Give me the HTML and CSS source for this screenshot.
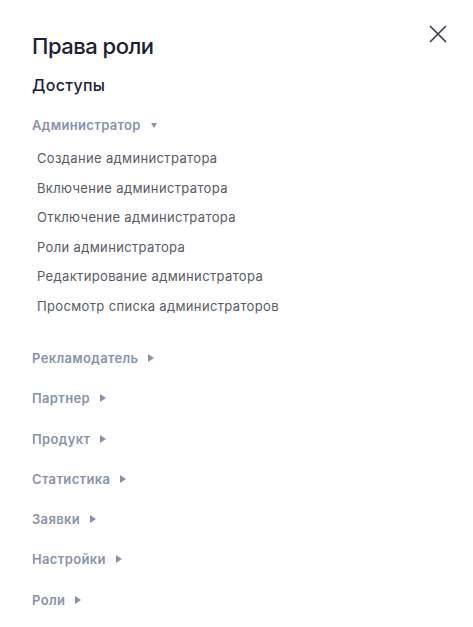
FILE: index.html
```html
<!DOCTYPE html>
<html lang="ru">
<head>
<meta charset="utf-8">
<link rel="stylesheet" href="styles.css">
</head>
<body>
<div class="panel">
  <div class="header">
    <h1 class="title">Права роли</h1>
    <button class="close" aria-label="Закрыть">
      <svg width="18" height="18" viewBox="0 0 18 18"><path d="M1.5 1.5 L16.5 16.5 M16.5 1.5 L1.5 16.5" stroke="#3d4155" stroke-width="1.7" stroke-linecap="round" fill="none"/></svg>
    </button>
  </div>
  <h2 class="subtitle">Доступы</h2>
  <div class="group open">
    <div class="group-head">Администратор <span class="caret down"></span></div>
    <ul class="items">
      <li>Создание администратора</li>
      <li>Включение администратора</li>
      <li>Отключение администратора</li>
      <li>Роли администратора</li>
      <li>Редактирование администратора</li>
      <li>Просмотр списка администраторов</li>
    </ul>
  </div>
  <div class="group"><div class="group-head">Рекламодатель <span class="caret right"></span></div></div>
  <div class="group"><div class="group-head">Партнер <span class="caret right"></span></div></div>
  <div class="group"><div class="group-head">Продукт <span class="caret right"></span></div></div>
  <div class="group"><div class="group-head">Статистика <span class="caret right"></span></div></div>
  <div class="group"><div class="group-head">Заявки <span class="caret right"></span></div></div>
  <div class="group"><div class="group-head">Настройки <span class="caret right"></span></div></div>
  <div class="group"><div class="group-head">Роли <span class="caret right"></span></div></div>
</div>
</body>
</html>
```
FILE: styles.css
```css
html, body {
  margin: 0;
  padding: 0;
  background: #ffffff;
}
body {
  font-family: Inter, "Open Sans", sans-serif;
}
.panel {
  padding: 31px 26px 0 32px;
}
.header {
  display: flex;
  justify-content: space-between;
  align-items: flex-start;
}
.title {
  margin: 0;
  font-size: 22px;
  font-weight: 500;
  line-height: 30px;
  color: #1d2035;
  letter-spacing: -0.5px;
}
.close {
  border: 0;
  background: none;
  padding: 0;
  margin-top: -6px;
  width: 18px;
  height: 18px;
  cursor: pointer;
}
.close svg { display: block; }
.subtitle {
  margin: 13px 0 0;
  font-size: 16px;
  font-weight: 500;
  line-height: 22px;
  color: #1d2035;
  letter-spacing: 0.3px;
}
.group {
  margin-top: 20px;
}
.group + .group {
  margin-top: 22.3px;
}
.group.open + .group {
  margin-top: 34px;
}
.group-head {
  display: flex;
  align-items: center;
  gap: 10px;
  font-size: 13px;
  font-weight: 600;
  line-height: 18px;
  color: #8a92ab;
  letter-spacing: 0.35px;
}
.caret {
  display: inline-block;
  width: 0;
  height: 0;
}
.caret.down {
  border-left: 3.5px solid transparent;
  border-right: 3.5px solid transparent;
  border-top: 5px solid #8a92ab;
}
.caret.right {
  border-top: 4px solid transparent;
  border-bottom: 4px solid transparent;
  border-left: 6px solid #8a92ab;
}
.items {
  list-style: none;
  margin: 15px 0 0;
  padding: 0 0 0 5px;
}
.items li {
  font-size: 13px;
  line-height: 18px;
  color: #575b66;
  letter-spacing: 0.35px;
}
.items li + li {
  margin-top: 11.6px;
}
```
